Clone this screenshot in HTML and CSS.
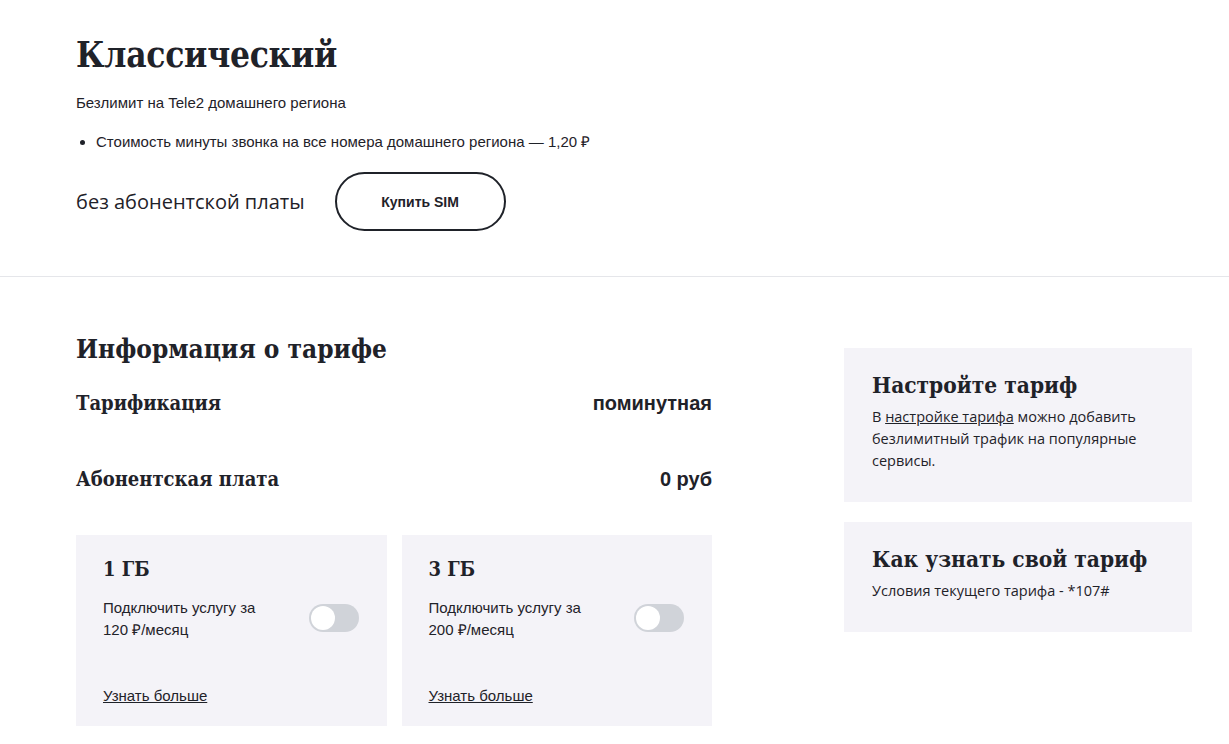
FILE: index.html
```html
<!DOCTYPE html>
<html lang="ru">
<head>
  <meta charset="UTF-8">
  <meta name="viewport" content="width=device-width, initial-scale=1.0">
  <title>Классический</title>
  <link rel="stylesheet" href="styles.css">
</head>
<body>
  <section class="hero">
    <div class="wrap">
      <h1>Классический</h1>
      <p class="lead">Безлимит на Tele2 домашнего региона</p>
      <ul class="features">
        <li>Стоимость минуты звонка на все номера домашнего региона — 1,20 ₽</li>
      </ul>
      <div class="buy-row">
        <span class="price">без абонентской платы</span>
        <button class="buy-btn">Купить SIM</button>
      </div>
    </div>
  </section>

  <section class="details">
    <div class="wrap columns">
      <div class="main-col">
        <h2>Информация о тарифе</h2>
        <div class="param">
          <span class="param-name">Тарификация</span>
          <span class="param-value">поминутная</span>
        </div>
        <div class="param">
          <span class="param-name">Абонентская плата</span>
          <span class="param-value">0 руб</span>
        </div>
        <div class="options">
          <div class="option">
            <h3>1 ГБ</h3>
            <div class="option-row">
              <p>Подключить услугу за<br>120 ₽/месяц</p>
              <label class="switch"><input type="checkbox"><span></span></label>
            </div>
            <a href="#" class="more">Узнать больше</a>
          </div>
          <div class="option">
            <h3>3 ГБ</h3>
            <div class="option-row">
              <p>Подключить услугу за<br>200 ₽/месяц</p>
              <label class="switch"><input type="checkbox"><span></span></label>
            </div>
            <a href="#" class="more">Узнать больше</a>
          </div>
        </div>
      </div>

      <aside class="side-col">
        <div class="side-card">
          <h4>Настройте тариф</h4>
          <p>В <a href="#">настройке тарифа</a> можно добавить безлимитный трафик на популярные сервисы.</p>
        </div>
        <div class="side-card">
          <h4>Как узнать свой тариф</h4>
          <p>Условия текущего тарифа - *107#</p>
        </div>
      </aside>
    </div>
  </section>
</body>
</html>
```

FILE: styles.css
```css
body {
  margin: 0;
  font-family: 'Liberation Sans', Arial, sans-serif;
  color: #1f2229;
  background: #fff;
}
.wrap {
  padding: 0 37px 0 76px;
}
h1, h2, h3, h4, .param-name {
  font-family: 'DejaVu Serif Condensed', 'DejaVu Serif', serif;
  font-stretch: condensed;
  font-weight: bold;
  margin: 0;
  color: #1f2229;
}

/* hero */
.hero {
  padding-top: 33px;
  padding-bottom: 45px;
  border-bottom: 1px solid #e5e6ea;
}
h1 {
  font-size: 35px;
  line-height: 44px;
  letter-spacing: -0.3px;
}
.lead {
  font-size: 15px;
  line-height: 20px;
  margin: 16px 0 0;
}
.features {
  margin: 19px 0 0;
  padding-left: 20px;
  font-size: 15px;
  line-height: 20px;
}
.buy-row {
  display: flex;
  align-items: center;
  gap: 30px;
  margin-top: 20px;
}
.price {
  font-family: 'Open Sans', sans-serif;
  font-size: 20px;
}
.buy-btn {
  width: 171px;
  height: 59px;
  border: 2px solid #1f2229;
  border-radius: 30px;
  background: #fff;
  font-family: 'Liberation Sans', Arial, sans-serif;
  font-weight: bold;
  font-size: 14px;
  color: #1f2229;
  cursor: pointer;
}

/* details */
.details {
  padding-top: 55px;
}
.columns {
  display: flex;
  gap: 132px;
}
.main-col {
  width: 636px;
}
h2 {
  font-size: 26px;
  line-height: 34px;
}
.param {
  display: flex;
  justify-content: space-between;
  align-items: baseline;
  margin-top: 25px;
  height: 76px;
}
.param + .param {
  margin-top: 0;
  height: 68px;
}
.param-name {
  font-size: 20px;
}
.param-value {
  font-weight: bold;
  font-size: 20px;
}
.options {
  display: grid;
  grid-template-columns: 1fr 1fr;
  gap: 15px;
}
.option {
  background: #f4f3f8;
  padding: 21px 28px 22px 27px;
  height: 148px;
  display: flex;
  flex-direction: column;
}
h3 {
  font-size: 20px;
  line-height: 26px;
}
.option-row {
  display: flex;
  justify-content: space-between;
  align-items: flex-start;
  margin-top: 15px;
}
.option-row p {
  margin: 0;
  font-size: 15px;
  line-height: 22px;
}
.switch {
  position: relative;
  display: block;
  width: 50px;
  height: 28px;
  margin-top: 7px;
}
.switch input {
  display: none;
}
.switch span {
  position: absolute;
  inset: 0;
  background: #d0d3d9;
  border-radius: 14px;
}
.switch span::before {
  content: '';
  position: absolute;
  left: 2px;
  top: 2px;
  width: 24px;
  height: 24px;
  border-radius: 50%;
  background: #fff;
}
.more {
  margin-top: auto;
  font-size: 15px;
  color: #1f2229;
}

/* sidebar */
.side-col {
  width: 348px;
  margin-top: 16px;
}
.side-card {
  background: #f4f3f8;
  padding: 22px 28px 30px;
  margin-bottom: 20px;
}
h4 {
  font-size: 22.5px;
  line-height: 30px;
}
.side-card p {
  font-family: 'Open Sans', sans-serif;
  font-size: 14.5px;
  line-height: 22px;
  margin: 6px 0 0;
}
.side-card a {
  color: #1f2229;
}
```
